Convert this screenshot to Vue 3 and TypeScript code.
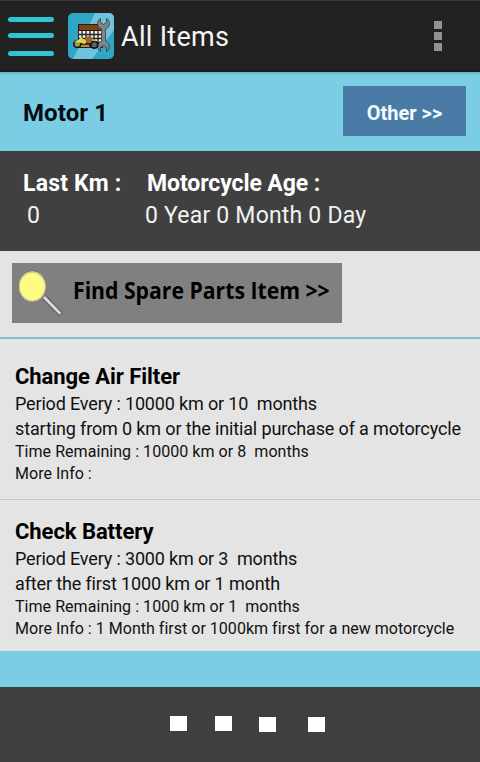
<script lang="ts" setup>
import { ref } from 'vue';

interface ServiceItem {
  title: string;
  period: string;
  note: string;
  remaining: string;
  info: string;
}

const motorName = ref<string>('Motor 1');
const lastKm = ref<number>(0);
const motorAge = ref<string>('0 Year 0 Month 0 Day');

const items = ref<ServiceItem[]>([
  {
    title: 'Change Air Filter',
    period: '10000 km or 10  months',
    note: 'starting from 0 km or the initial purchase of a motorcycle',
    remaining: '10000 km or 8  months',
    info: '',
  },
  {
    title: 'Check Battery',
    period: '3000 km or 3  months',
    note: 'after the first 1000 km or 1 month',
    remaining: '1000 km or 1  months',
    info: '1 Month first or 1000km first for a new motorcycle',
  },
]);
</script>

<template>
  <div class="page">
    <header class="header">
      <button class="header__menu" aria-label="Menu">
        <span></span>
        <span></span>
        <span></span>
      </button>
      <svg class="header__logo" width="46" height="46" viewBox="0 0 46 46">
        <defs>
          <clipPath id="logoClip"><rect width="46" height="46" rx="5" /></clipPath>
        </defs>
        <g clip-path="url(#logoClip)">
          <rect width="46" height="46" fill="#2fa6c6" />
          <path d="M27 0H46V17L24 46H5Z" fill="#6fc3db" />
        </g>
        <!-- calendar -->
        <rect x="10.500" y="11.500" width="24" height="23" fill="#f4f4ee" stroke="#222" />
        <path d="M14 18V34M18 18V34M22 18V34M26 18V34M30 18V34M11 21.500H34M11 25.500H34M11 29.500H34" stroke="#222" stroke-width="1.300" />
        <rect x="10.500" y="11.500" width="24" height="6" fill="#7b4218" stroke="#2b1a0e" />
        <!-- wrench -->
        <path
          d="M32.500 5.500C28.500 7.500 28.500 14 33.500 16V28C28.500 30 28.500 36.500 32.500 38.500V34.500L35.500 32.500L38.500 34.500V38.500C42.500 36.500 42.500 30 37.500 28V16C42.500 14 42.500 7.500 38.500 5.500V9.500L35.500 11.500L32.500 9.500Z"
          fill="#7c868a"
          stroke="#3c474b"
          stroke-width="0.900"
        />
        <!-- motorcycle -->
        <path d="M9 31L12 27L17 28L22 26L28 28L25 32L20 34H13Z" fill="#3a2a18" />
        <circle cx="9.300" cy="31" r="3.500" fill="#9aa04c" stroke="#111" stroke-width="1.600" />
        <circle cx="26.300" cy="31.700" r="3.400" fill="#4f6a68" stroke="#111" stroke-width="1.700" />
        <path d="M6 28.500L11 26.500L13 23.500L15 26L19 28L17 31L13 30L9 29Z" fill="#e3d447" />
        <path d="M17 25L20 23L25 25L23 30L19 30Z" fill="#a5612b" />
        <path d="M13 33H21M24 27L28 27.500" stroke="#d6b940" stroke-width="1.500" />
      </svg>
      <h1>All Items</h1>
      <button class="header__more" aria-label="More">
        <span></span>
        <span></span>
        <span></span>
      </button>
    </header>

    <section class="motor">
      <h2>{{ motorName }}</h2>
      <button class="motor__btn">Other &gt;&gt;</button>
    </section>

    <section class="stats">
      <div class="stats__km">
        <p class="stats__label">Last Km :</p>
        <p class="stats__value">{{ lastKm }}</p>
      </div>
      <div class="stats__age">
        <p class="stats__label">Motorcycle Age :</p>
        <p class="stats__value">{{ motorAge }}</p>
      </div>
    </section>

    <section class="search">
      <button class="search__btn">
        <svg width="50" height="60" viewBox="0 0 50 60">
          <path d="M32 34L49 51.500" stroke="#626262" stroke-width="5.500" />
          <path d="M32 34L48.300 50.800" stroke="#d8d8d8" stroke-width="3" />
          <ellipse cx="20.300" cy="23.500" rx="14" ry="15.500" fill="#fffb82" stroke="#626262" />
          <ellipse cx="20.300" cy="23.500" rx="13" ry="14.500" fill="none" stroke="#c9c79a" stroke-width="1.300" />
        </svg>
        <span>Find Spare Parts Item &gt;&gt;</span>
      </button>
    </section>

    <ul class="items">
      <li v-for="item in items" :key="item.title" class="item">
        <h3>{{ item.title }}</h3>
        <p class="item__period">Period Every : {{ item.period }}</p>
        <p class="item__note">{{ item.note }}</p>
        <p class="item__small">Time Remaining : {{ item.remaining }}</p>
        <p class="item__small item__info">More Info : {{ item.info }}</p>
      </li>
    </ul>

    <footer class="footer">
      <span></span>
      <span></span>
      <span class="low"></span>
      <span class="low"></span>
    </footer>
  </div>
</template>

<style>
body {
  margin: 0;
  background-color: #7acde2;
}
</style>

<style scoped>
.page {
  display: flex;
  flex-direction: column;
  width: 480px;
  height: 762px;
  overflow: hidden;
  background-color: #7acde2;
  font-family: Roboto, "Liberation Sans", sans-serif;
}

h1,
h2,
h3,
p {
  margin: 0;
}

button {
  padding: 0;
  border: none;
  border-radius: 0;
  background: none;
  font-family: inherit;
  cursor: pointer;
}

.header {
  box-sizing: border-box;
  display: flex;
  align-items: center;
  flex-shrink: 0;
  height: 72px;
  padding: 0 38px 2px 8px;
  border-top: 1px solid #3a3a3a;
  border-bottom: 2px solid #14201f;
  background-color: #222;
}

.header__menu {
  display: flex;
  flex-direction: column;
  width: 46px;
  margin-top: 3px;
}

.header__menu span {
  height: 5px;
  border-radius: 3px;
  background-color: #2fc5d5;
}

.header__menu span:nth-child(2) {
  margin: 11px 0 13px;
}

.header__logo {
  flex-shrink: 0;
  margin: 2px 0 0 14px;
}

.header h1 {
  margin: 4px 0 0 7px;
  color: #f5f5f5;
  font-size: 27px;
  font-weight: 400;
  letter-spacing: 0.3px;
}

.header__more {
  display: flex;
  flex-direction: column;
  gap: 3px;
  margin: 2px 0 0 auto;
}

.header__more span {
  width: 8px;
  height: 8px;
  background-color: #919191;
}

.motor {
  display: flex;
  align-items: center;
  justify-content: space-between;
  box-sizing: border-box;
  flex-shrink: 0;
  height: 79px;
  padding: 0 14px 0 23px;
  box-shadow: inset 0 3px 2px -1px #6fafbd;
}

.motor h2 {
  margin-top: 3px;
  color: #020c12;
  font-size: 24px;
  font-weight: 700;
  letter-spacing: 0.1px;
}

.motor__btn {
  width: 123px;
  height: 50px;
  margin-bottom: 1px;
  padding-top: 3px;
  background-color: #497ba6;
  color: #f4fbff;
  font-size: 20px;
  font-weight: 700;
}

.stats {
  display: flex;
  box-sizing: border-box;
  flex-shrink: 0;
  height: 100px;
  padding: 17px 23px 0;
  background-color: #404040;
  color: #fff;
}

.stats__km {
  width: 124px;
}

.stats__label {
  font-size: 23px;
  font-weight: 700;
  line-height: 32px;
}

.stats__km .stats__label {
  letter-spacing: 0.2px;
}

.stats__age .stats__label {
  letter-spacing: -0.1px;
}

.stats__value {
  color: #f2f2f2;
  font-size: 23px;
  line-height: 32px;
  letter-spacing: 0.2px;
}

.stats__km .stats__value {
  margin-left: 4px;
}

.stats__age .stats__value {
  margin-left: -2px;
}

.search {
  box-sizing: border-box;
  flex-shrink: 0;
  height: 88px;
  padding: 12px;
  border-bottom: 2px solid #7fc0cf;
  background-color: #e4e4e4;
}

.search__btn {
  display: flex;
  align-items: center;
  width: 330px;
  height: 60px;
  background-color: #808080;
  color: #000;
}

.search__btn svg {
  flex-shrink: 0;
}

.search__btn span {
  margin: -8px 0 0 11px;
  font-family: "Open Sans", "Noto Sans", sans-serif;
  font-size: 24px;
  font-weight: 700;
  white-space: nowrap;
  transform: scaleX(0.883);
  transform-origin: left center;
}

.items {
  flex-shrink: 0;
  margin: 0;
  padding: 0;
  list-style: none;
}

.item {
  padding: 18px 15px 11px;
  background-color: #e4e4e4;
  color: #111;
  white-space: pre;
}

.item:first-child {
  padding: 24px 15px 14px;
  border-bottom: 1px solid #c6c6c6;
}

.item h3 {
  color: #000;
  font-size: 22px;
  font-weight: 700;
  line-height: 28px;
  letter-spacing: -0.06px;
}

.item__period,
.item__note {
  font-size: 18px;
  line-height: 25px;
  letter-spacing: -0.14px;
}

.item__period {
  letter-spacing: -0.16px;
}

.item__small {
  font-size: 16px;
  line-height: 22px;
  letter-spacing: 0.05px;
}

.item__info {
  letter-spacing: 0.02px;
}

.footer {
  display: flex;
  box-sizing: border-box;
  height: 75px;
  margin-top: auto;
  padding: 29px 0 0 170px;
  background-color: #404040;
}

.footer span {
  width: 17px;
  height: 15px;
  margin-right: 28px;
  background-color: #fff;
}

.footer span:nth-child(2) {
  margin-right: 27px;
}

.footer .low {
  margin-top: 1px;
  margin-right: 32px;
}
</style>
